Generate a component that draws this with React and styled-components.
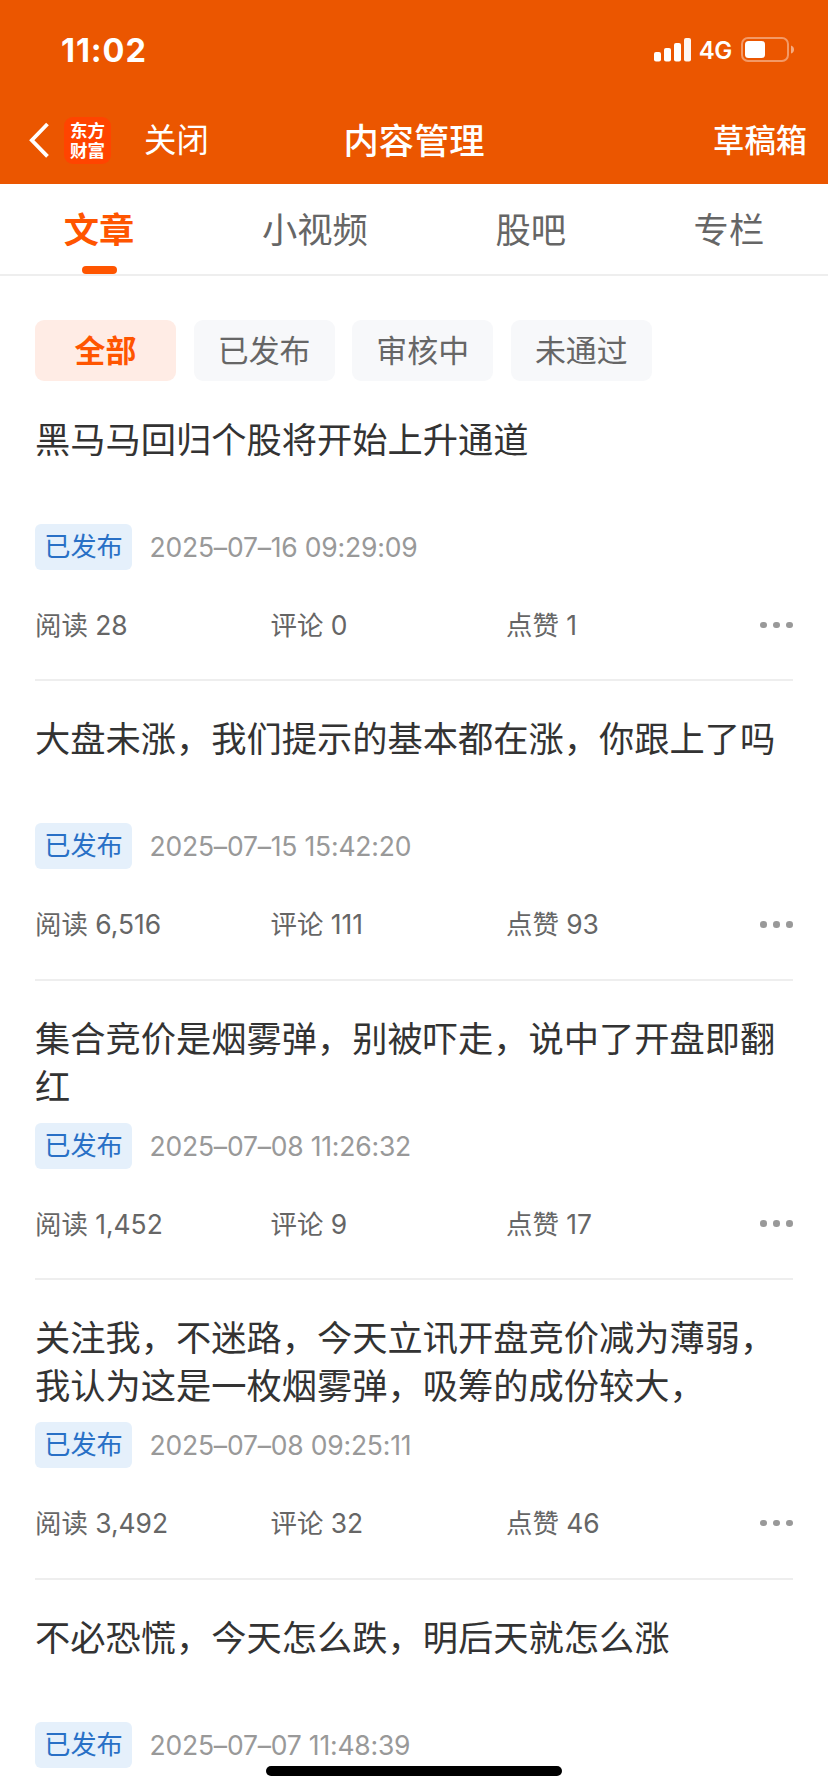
import React from 'react';
import styled, { createGlobalStyle } from 'styled-components';

const GlobalStyle = createGlobalStyle`
  * {
    box-sizing: border-box;
  }
  body {
    margin: 0;
    background: #fff;
    font-family: Inter, "Noto Sans CJK SC", sans-serif;
  }
`

const Page = styled.div`
  position: relative;
  width: 828px;
  height: 1792px;
  overflow: hidden;
  background: #fff;
`

const Header = styled.header`
  height: 184px;
  background: #eb5600;
  color: #fff;
`

const StatusBar = styled.div`
  display: flex;
  align-items: center;
  justify-content: space-between;
  height: 96px;
  padding: 3px 34px 0 61px;
`

const Time = styled.span`
  padding-top: 2px;
  font-size: 32.5px;
  font-weight: 750;
  line-height: 40px;
  letter-spacing: 0.9px;
`

const StatusIcons = styled.div`
  display: flex;
  align-items: center;
`

const Network = styled.span`
  margin: 2px 9px 0 8px;
  font-size: 24px;
  font-weight: 600;
  line-height: 28px;
  letter-spacing: -0.3px;
`

const NavBar = styled.div`
  display: grid;
  grid-template-columns: 1fr auto 1fr;
  align-items: center;
  height: 88px;
  padding: 0 21px;
`

const NavLeft = styled.div`
  display: flex;
  align-items: center;
  padding-left: 8px;
`

const Logo = styled.div`
  display: flex;
  flex-direction: column;
  align-items: center;
  width: 47px;
  height: 47px;
  margin: 0 33px 0 15px;
  padding-top: 3px;
  border-radius: 9px;
  background: #ff4400;
  font-family: "Noto Sans CJK SC", sans-serif;
  font-size: 17.5px;
  font-weight: 700;
  line-height: 20px;
`

const NavText = styled.span`
  padding-top: 2px;
  font-size: ${(props) => (props.$bold ? '31.3px' : '32.4px')};
  line-height: 44px;
  font-weight: ${(props) => (props.$bold ? 500 : 400)};
  text-align: ${(props) => (props.$bold ? 'right' : 'left')};
`

const NavTitle = styled.h1`
  margin: 0;
  padding-top: 3px;
  font-size: 35.3px;
  font-weight: 500;
  line-height: 48px;
`

const Tabs = styled.nav`
  display: flex;
  justify-content: space-around;
  height: 92px;
  border-bottom: 2px solid #eee;
`

const Tab = styled.div`
  display: flex;
  flex-direction: column;
  align-items: center;
  justify-content: space-between;
  padding-top: 23px;
  color: ${(props) => (props.$active ? '#ff5500' : '#666')};
  font-size: 35.3px;
  font-weight: ${(props) => (props.$active ? 700 : 400)};
  line-height: 48px;
`

const TabLine = styled.div`
  width: 35px;
  height: 8px;
  border-radius: 4px;
  background: #ff5500;
`

const Filters = styled.div`
  display: flex;
  gap: 17.6px;
  padding: 44px 35px 0;
`

const Chip = styled.div`
  width: 141px;
  height: 61px;
  border-radius: 9px;
  background: ${(props) => (props.$active ? '#ffece5' : '#f7f8fa')};
  color: ${(props) => (props.$active ? '#ff5500' : '#666')};
  font-size: 30.9px;
  font-weight: ${(props) => (props.$active ? 700 : 400)};
  line-height: 61px;
  text-align: center;
`

const List = styled.div`
  padding: 1px 35px 0;
`

const Item = styled.article`
  height: 299.4px;
  padding-top: 35px;
  border-bottom: 2px solid #eee;
`

const Title = styled.h2`
  height: 96px;
  margin: 0;
  color: #333;
  font-size: 35.25px;
  font-weight: 400;
  line-height: 48px;
`

const Meta = styled.div`
  display: flex;
  align-items: center;
  margin-top: 11px;
`

const Badge = styled.span`
  width: 97px;
  height: 46px;
  border-radius: 6px;
  background: #e5f0fb;
  color: #2970c6;
  font-size: 26.2px;
  line-height: 46px;
  text-align: center;
`

const DateText = styled.time`
  margin-left: 17.5px;
  color: #999;
  font-size: 26.5px;
  line-height: 46px;
  letter-spacing: -0.2px;
`

const Stats = styled.div`
  display: flex;
  align-items: center;
  height: 46px;
  margin-top: 32px;
`

const Stat = styled.span`
  width: 235.5px;
  color: #666;
  font-size: 26.4px;
  line-height: 46px;
  white-space: nowrap;
`

const More = styled.div`
  display: flex;
  gap: 6.6px;
  margin-left: auto;
`

const Dot = styled.i`
  width: 6.6px;
  height: 6.6px;
  border-radius: 50%;
  background: #999;
`

const HomeBar = styled.div`
  position: absolute;
  bottom: 16px;
  left: 266px;
  width: 296px;
  height: 10px;
  border-radius: 5px;
  background: #000;
`

const tabs = ['文章', '小视频', '股吧', '专栏'];
const filters = ['全部', '已发布', '审核中', '未通过'];

const articles = [
  { title: '黑马马回归个股将开始上升通道', date: '2025–07–16 09:29:09', read: '28', comment: '0', like: '1' },
  { title: '大盘未涨，我们提示的基本都在涨，你跟上了吗', date: '2025–07–15 15:42:20', read: '6,516', comment: '111', like: '93' },
  { title: '集合竞价是烟雾弹，别被吓走，说中了开盘即翻红', date: '2025–07–08 11:26:32', read: '1,452', comment: '9', like: '17' },
  { title: '关注我，不迷路，今天立讯开盘竞价减为薄弱，我认为这是一枚烟雾弹，吸筹的成份较大，', date: '2025–07–08 09:25:11', read: '3,492', comment: '32', like: '46' },
  { title: '不必恐慌，今天怎么跌，明后天就怎么涨', date: '2025–07–07 11:48:39' },
];

const Signal = () => (
  <svg width="37" height="24" viewBox="0 0 37 24" fill="#fff">
    <rect x="0" y="14" width="7" height="9.5" rx="2" />
    <rect x="10" y="10" width="7" height="13.5" rx="2" />
    <rect x="20" y="5" width="7" height="18.5" rx="2" />
    <rect x="30" y="0" width="7" height="23.5" rx="2" opacity="0.94" />
  </svg>
)

const Battery = () => (
  <svg width="53" height="25" viewBox="0 0 53 25">
    <rect x="1" y="1" width="46" height="23" rx="6" fill="none" stroke="#fff" strokeWidth="2" opacity="0.4" />
    <rect x="4" y="4" width="20" height="17" rx="3.5" fill="#fff" />
    <path d="M50 8.5 Q53 9.5 53 12.5 Q53 15.5 50 16.5 Z" fill="#fff" opacity="0.5" />
  </svg>
)

const BackIcon = () => (
  <svg width="20" height="36" viewBox="0 0 20 36" fill="none" stroke="#fff" strokeWidth="3.8">
    <path d="M18.5 2 L2.8 18.2 L18.5 34.4" />
  </svg>
)

export default class App extends React.Component {
  state = {
    tab: 0,
    filter: 0,
  }

  render() {
    return (
      <Page>
        <GlobalStyle />
        <Header>
          <StatusBar>
            <Time>11:02</Time>
            <StatusIcons>
              <Signal />
              <Network>4G</Network>
              <Battery />
            </StatusIcons>
          </StatusBar>
          <NavBar>
            <NavLeft>
              <BackIcon />
              <Logo>
                <span>东方</span>
                <span>财富</span>
              </Logo>
              <NavText>关闭</NavText>
            </NavLeft>
            <NavTitle>内容管理</NavTitle>
            <NavText $bold>草稿箱</NavText>
          </NavBar>
        </Header>
        <Tabs>
          {tabs.map((name, i) => (
            <Tab key={name} $active={i === this.state.tab} onClick={() => this.setState({ tab: i })}>
              {name}
              {i === this.state.tab && <TabLine />}
            </Tab>
          ))}
        </Tabs>
        <Filters>
          {filters.map((name, i) => (
            <Chip key={name} $active={i === this.state.filter} onClick={() => this.setState({ filter: i })}>
              {name}
            </Chip>
          ))}
        </Filters>
        <List>
          {articles.map((a) => (
            <Item key={a.date}>
              <Title>{a.title}</Title>
              <Meta>
                <Badge>已发布</Badge>
                <DateText>{a.date}</DateText>
              </Meta>
              {a.read && (
                <Stats>
                  <Stat>阅读 {a.read}</Stat>
                  <Stat>评论 {a.comment}</Stat>
                  <Stat>点赞 {a.like}</Stat>
                  <More>
                    <Dot />
                    <Dot />
                    <Dot />
                  </More>
                </Stats>
              )}
            </Item>
          ))}
        </List>
        <HomeBar />
      </Page>
    )
  }
}
